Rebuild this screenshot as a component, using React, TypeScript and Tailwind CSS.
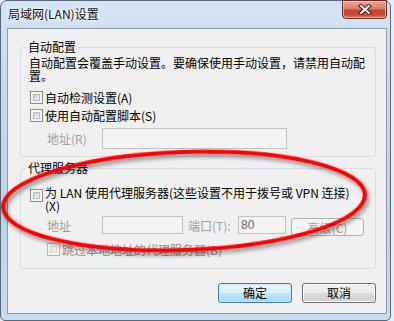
import type { ReactNode } from "react";

function Check({ disabled = false }: { disabled?: boolean }) {
  return (
    <span
      className={`block h-[13px] w-[13px] shrink-0 border p-[2px] ${
        disabled ? "border-[#b8b8b8] bg-[#f6f6f6]" : "border-[#8e8f8f] bg-[#f4f4f4]"
      }`}
    >
      <span
        className={`block h-full w-full border ${
          disabled
            ? "border-[#d8d8d8] bg-gradient-to-br from-[#e4e4e4] to-[#f7f7f7]"
            : "border-[#b5b9be] bg-gradient-to-br from-[#cbcfd5] to-[#f6f6f6]"
        }`}
      />
    </span>
  );
}

function Group({ title, children }: { title: string; children: ReactNode }) {
  return (
    <fieldset className="w-[356px] rounded-[3px] border border-[#d5dfe5]">
      <legend className="ml-[5px] px-[2px] text-[12px] leading-[14px] text-black">{title}</legend>
      {children}
    </fieldset>
  );
}

function Button({ label, primary = false }: { label: string; primary?: boolean }) {
  return (
    <button
      className={`flex h-[20px] w-[74px] items-center justify-center rounded-[3px] border text-[12px] leading-[14px] text-black ${
        primary
          ? "border-[#3c7fb1] bg-[linear-gradient(#eaf6fd_0%,#d9f0fc_48%,#bee6fd_50%,#a7d9f5_100%)] shadow-[inset_0_0_0_1px_#c8e8f9]"
          : "border-[#707070] bg-[linear-gradient(#f2f2f2_0%,#ebebeb_48%,#dddddd_50%,#cfcfcf_100%)] shadow-[inset_0_0_0_1px_#fcfcfc]"
      }`}
    >
      {label}
    </button>
  );
}

export default function App() {
  return (
    <div className="relative h-[321px] w-[394px] overflow-hidden bg-[#e9eef3] font-['Noto_Sans_CJK_SC',sans-serif]">
      <div className="flex h-[321px] w-[391px] flex-col rounded-t-[7px] rounded-b-[5px] border border-[#5b6878] bg-[linear-gradient(180deg,#d4e4f4_0%,#c4d8ee_30%,#bed4eb_70%,#c8dbef_100%)]">
        {/* title bar */}
        <div className="flex h-[27px] items-start justify-between">
          <div className="pl-[7px] pt-[5px] text-[12px] leading-[16px] text-[#111] [text-shadow:0_0_6px_#fff,0_0_3px_#fff]">
            局域网(LAN)设置
          </div>
          <div className="-mt-[1px] mr-[3px] flex h-[19px] w-[45px] items-center justify-center rounded-b-[4px] border border-[#6d2a20] bg-[linear-gradient(180deg,#e9a89a_0%,#dc7c68_45%,#c8462f_55%,#c94a33_80%,#d9745c_100%)] shadow-[inset_0_0_0_1px_rgba(255,220,210,0.6)]">
            <svg width="14" height="11" viewBox="0 0 14 11">
              <path d="M3 2 L11 9 M11 2 L3 9" stroke="#4a1c16" strokeWidth="4" strokeLinecap="square" />
              <path d="M3 2 L11 9 M11 2 L3 9" stroke="#fff" strokeWidth="2" strokeLinecap="square" />
            </svg>
          </div>
        </div>

        {/* client area */}
        <div className="ml-[6px] flex h-[286px] w-[380px] flex-col border border-[#8a9db5] bg-[#f0f0f0] pl-[12px] pr-[10px] pt-[11px]">
          <Group title="自动配置">
            <div className="pl-[8px] pt-[2px] pb-[7px] text-[12px] leading-[13px] text-black">
              <div className="h-[13px] whitespace-nowrap">自动配置会覆盖手动设置。要确保使用手动设置，请禁用自动配</div>
              <div className="h-[13px]">置。</div>
              <div className="mt-[9px] flex h-[13px] items-center">
                <span className="ml-[1px]">
                  <Check />
                </span>
                <span className="ml-[2px]">自动检测设置(A)</span>
              </div>
              <div className="mt-[5px] flex h-[13px] items-center">
                <span className="ml-[1px]">
                  <Check />
                </span>
                <span className="ml-[2px]">使用自动配置脚本(S)</span>
              </div>
              <div className="mt-[6px] flex h-[21px] items-center">
                <span className="ml-[18px] w-[55px] text-[#a0a0a0]">地址(R)</span>
                <span className="h-[21px] w-[185px] border border-[#c2c2c2] bg-[#f3f3f3]" />
              </div>
            </div>
          </Group>

          <div className="mt-[4px]">
            <Group title="代理服务器">
              <div className="pl-[8px] pt-[11px] pb-[12px] text-[12px] leading-[13px] text-black">
                <div className="flex items-start">
                  <span className="ml-[1px] mt-[3px]">
                    <Check />
                  </span>
                  <div className="ml-[2px]">
                    <div className="h-[13px] whitespace-nowrap">为 LAN 使用代理服务器(这些设置不用于拨号或 VPN 连接)</div>
                    <div className="h-[13px]">(X)</div>
                  </div>
                </div>
                <div className="mt-[4px] flex items-start text-[#a0a0a0]">
                  <span className="ml-[18px] flex h-[18px] w-[55px] items-center">地址</span>
                  <span className="h-[18px] w-[81px] border border-[#c2c2c2] bg-[#f3f3f3]" />
                  <span className="ml-[5px] flex h-[18px] w-[50px] items-center">端口(T):</span>
                  <span className="flex h-[18px] w-[48px] items-center border border-[#c2c2c2] bg-[#f3f3f3] pl-[2px] font-['Liberation_Sans',sans-serif] text-[12px] text-[#6d6d6d]">
                    80
                  </span>
                  <span className="ml-[5px] mt-[2px] flex h-[18px] w-[73px] items-center justify-center rounded-[3px] border border-[#adb2b5] bg-[#f4f4f4]">
                    高级(C)
                  </span>
                </div>
                <div className="mt-[7px] flex h-[13px] items-center text-[#8d8d8d]">
                  <span className="ml-[18px]">
                    <Check disabled />
                  </span>
                  <span className="ml-[2px]">跳过本地地址的代理服务器(B)</span>
                </div>
              </div>
            </Group>
          </div>

          <div className="mt-[14px] flex justify-end gap-[10px]">
            <Button label="确定" primary />
            <Button label="取消" />
          </div>
        </div>
      </div>

      {/* red annotation ellipse drawn over the screenshot */}
      <svg className="pointer-events-none absolute left-0 top-0" width="394" height="321" viewBox="0 0 394 321">
        <defs>
          <filter id="sh" x="-10%" y="-30%" width="120%" height="160%">
            <feDropShadow dx="2" dy="3" stdDeviation="2" floodColor="#000" floodOpacity="0.45" />
          </filter>
        </defs>
        <ellipse
          cx="184"
          cy="201"
          rx="181"
          ry="49"
          transform="rotate(-2 184 201)"
          fill="none"
          stroke="#f00"
          strokeWidth="4"
          filter="url(#sh)"
        />
      </svg>
    </div>
  );
}
